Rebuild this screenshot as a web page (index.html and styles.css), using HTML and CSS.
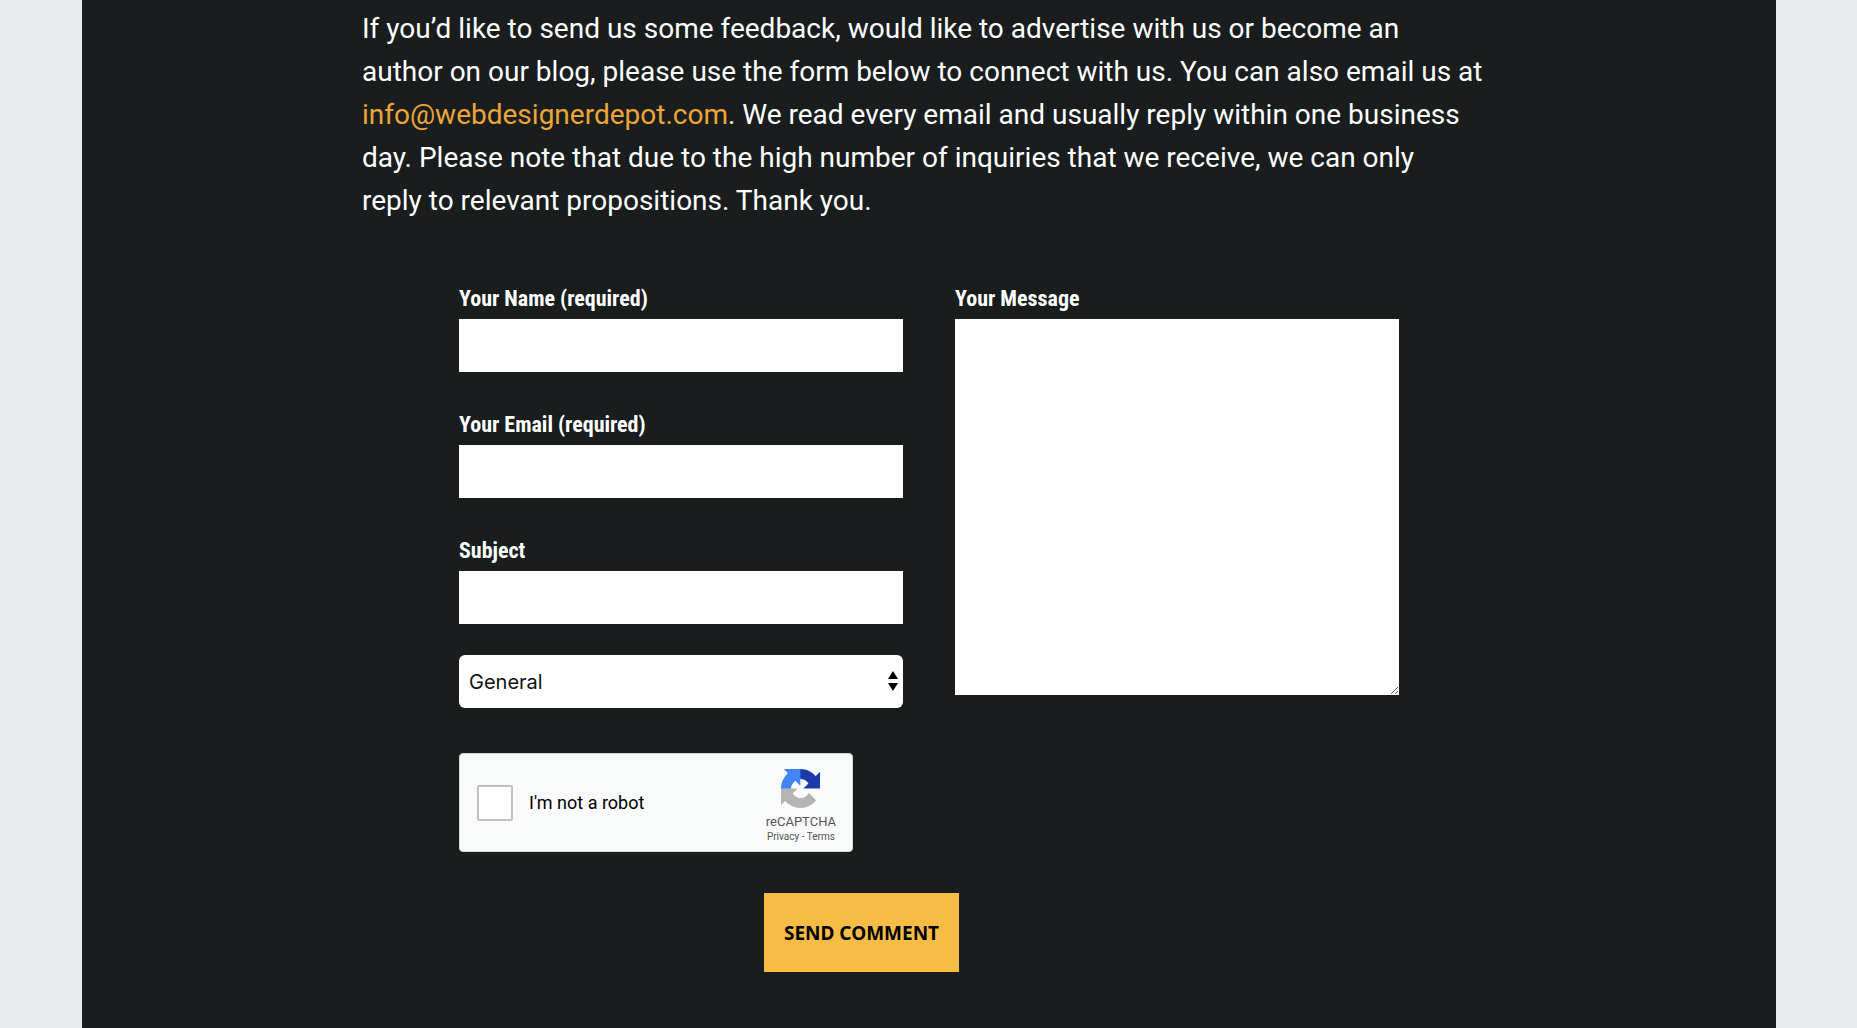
FILE: index.html
```
<!DOCTYPE html>
<html lang="en">
<head>
<meta charset="utf-8">
<title>Contact us</title>
<link rel="stylesheet" href="styles.css">
</head>
<body>
<main class="panel">
  <p class="intro">If you’d like to send us some feedback, would like to advertise with us or become an<br>
  author on our blog, please use the form below to connect with us. You can also email us at<br>
  <a href="mailto:info@webdesignerdepot.com">info@webdesignerdepot.com</a>. We read every email and usually reply within one business<br>
  day. Please note that due to the high number of inquiries that we receive, we can only<br>
  reply to relevant propositions. Thank you.</p>

  <form class="contact">
    <div class="columns">
      <div class="column">
        <div class="field">
          <label for="name">Your Name (required)</label>
          <input class="box" id="name" type="text">
        </div>
        <div class="field">
          <label for="email">Your Email (required)</label>
          <input class="box" id="email" type="email">
        </div>
        <div class="field">
          <label for="subject">Subject</label>
          <input class="box" id="subject" type="text">
        </div>
        <div class="picker">
          <select class="box" aria-label="Topic">
            <option>General</option>
          </select>
          <svg class="arrows" viewBox="0 0 10 20" aria-hidden="true">
            <path d="M5 0L10 8H0zM5 20L0 12H10z"/>
          </svg>
        </div>
        <div class="captcha">
          <input class="captcha-check" id="robot" type="checkbox">
          <label class="captcha-label" for="robot">I'm not a robot</label>
          <div class="captcha-brand">
            <svg class="captcha-logo" viewBox="0 0 64 64" aria-hidden="true">
              <path fill="#1c3aa9" d="M64 31.955l-.033-1.37V4.687l-7.16 7.16C50.948 4.674 42.033.093 32.05.093c-10.4 0-19.622 4.96-25.458 12.64l11.736 11.86a15.55 15.55 0 0 1 4.754-5.334c2.05-1.6 4.952-2.906 8.968-2.906.485 0 .86.057 1.135.163 4.976.393 9.288 3.14 11.828 7.124l-8.307 8.307L64 31.953"/>
              <path fill="#4285f4" d="M31.862.094l-1.37.033H4.594l7.16 7.16C4.58 13.147 0 22.06 0 32.046c0 10.4 4.96 19.622 12.64 25.458L24.5 45.768a15.55 15.55 0 0 1-5.334-4.754c-1.6-2.05-2.906-4.952-2.906-8.968 0-.485.057-.86.163-1.135.393-4.976 3.14-9.288 7.124-11.828l8.307 8.307L31.86.095"/>
              <path fill="#b4b4b4" d="M.001 32.045l.033 1.37v25.898l7.16-7.16c5.86 7.173 14.774 11.754 24.76 11.754 10.4 0 19.622-4.96 25.458-12.64l-11.736-11.86a15.55 15.55 0 0 1-4.754 5.334c-2.05 1.6-4.952 2.906-8.968 2.906-.485 0-.86-.057-1.135-.163-4.976-.393-9.288-3.14-11.828-7.124l8.307-8.307c-10.522.04-22.4.066-27.295-.005"/>
            </svg>
            <span class="captcha-name">reCAPTCHA</span>
            <span class="captcha-links"><a href="#privacy">Privacy</a> - <a href="#terms">Terms</a></span>
          </div>
        </div>
      </div>
      <div class="field">
        <label for="message">Your Message</label>
        <textarea class="message" id="message"></textarea>
      </div>
    </div>
    <button class="send" type="submit">SEND COMMENT</button>
  </form>
</main>
</body>
</html>
```

FILE: styles.css
```
* {
  box-sizing: border-box;
}

body {
  margin: 0;
  padding: 0 81px 0 82px;
  background: #e8eaee;
  font-family: Roboto, "Liberation Sans", sans-serif;
}

.panel {
  min-height: 100vh;
  padding: 7px 24px 56px;
  background: #191d1e;
  color: #fff;
}

.intro {
  max-width: 1134px;
  margin: 0 auto;
  font-size: 28px;
  line-height: 43px;
}

.intro a {
  color: #eca537;
  text-decoration: none;
}

.contact {
  max-width: 940px;
  margin: 61px auto 0;
}

.columns {
  display: grid;
  grid-template-columns: 1fr 1fr;
  gap: 52px;
  align-items: start;
}

.field {
  display: flex;
  flex-direction: column;
}

.field + .field {
  margin-top: 37px;
}

.field label {
  padding-bottom: 4px;
  font-family: "Roboto Condensed", "Liberation Sans Narrow", "Liberation Sans", sans-serif;
  font-size: 22px;
  font-weight: 700;
  line-height: 32px;
}

.box {
  width: 100%;
  height: 53px;
  padding: 0 10px;
  border: 0;
  background: #fff;
  color: #111;
  font-family: Inter, sans-serif;
  font-size: 20px;
}

.picker {
  position: relative;
  margin-top: 31px;
}

.picker .box {
  display: block;
  border-radius: 6px;
  appearance: none;
}

.arrows {
  position: absolute;
  top: 16px;
  right: 5px;
  width: 10px;
  height: 20px;
  pointer-events: none;
}

.message {
  height: 376px;
  padding: 10px;
  border: 0;
  background: #fff;
  font-size: 20px;
  resize: both;
}

.captcha {
  display: flex;
  align-items: center;
  max-width: 394px;
  height: 99px;
  margin-top: 45px;
  padding: 0 16px 0 17px;
  border: 1px solid #d3d3d3;
  border-radius: 4px;
  background: #f9fafa;
  color: #000;
}

.captcha-check {
  width: 36px;
  height: 36px;
  margin: 0;
  border: 2px solid #c1c1c1;
  border-radius: 2px;
  background: #fff;
  appearance: none;
}

.captcha-label {
  margin-left: 16px;
  font-size: 18px;
}

.captcha-brand {
  display: flex;
  flex-direction: column;
  align-items: center;
  margin-left: auto;
  padding-top: 8px;
  color: #555;
}

.captcha-logo {
  width: 39px;
  height: 39px;
  margin-bottom: 6px;
}

.captcha-name {
  font-size: 13px;
  line-height: 16px;
}

.captcha-links {
  font-size: 10px;
  line-height: 14px;
}

.captcha-links a {
  color: inherit;
  text-decoration: none;
}

.send {
  display: block;
  width: 195px;
  height: 79px;
  margin: 41px 0 0 305px;
  padding: 0;
  border: 0;
  background: #f7bc45;
  color: #000;
  font-family: "Noto Sans", sans-serif;
  font-size: 19px;
  font-weight: 700;
}
```
